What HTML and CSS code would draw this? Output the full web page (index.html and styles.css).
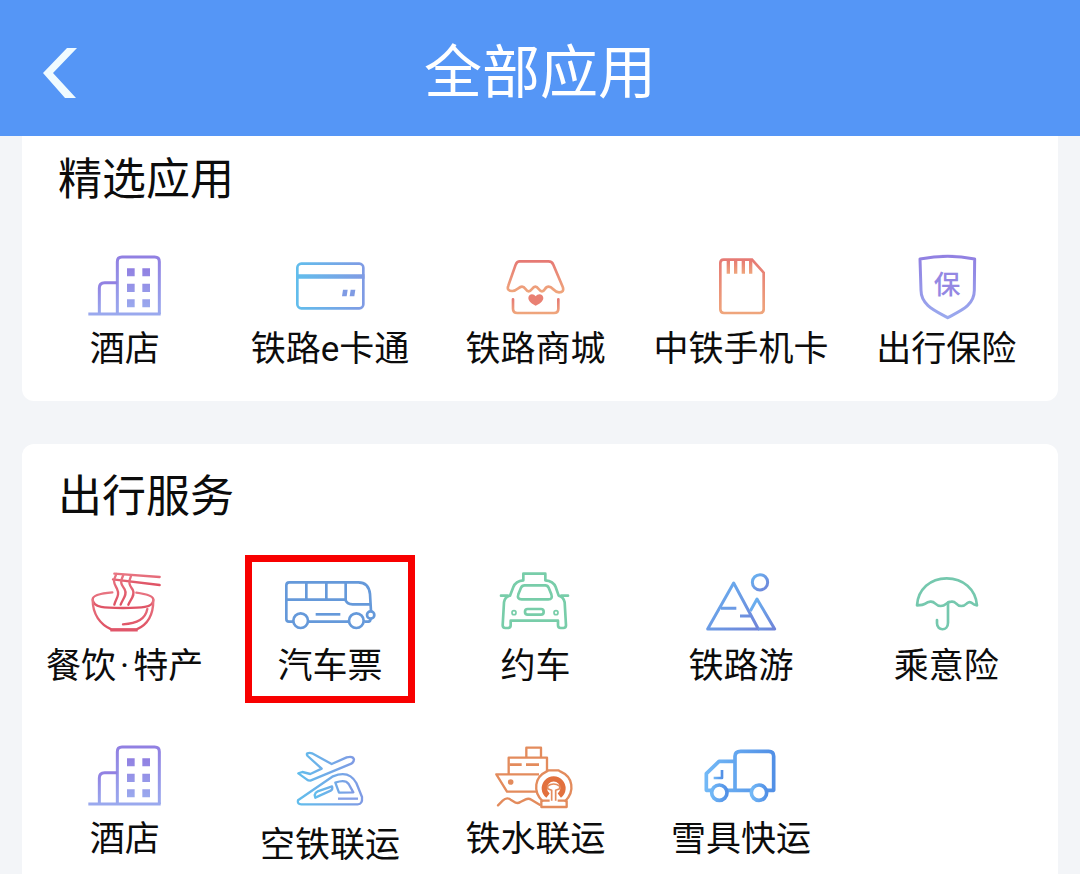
FILE: index.html
```
<!DOCTYPE html>
<html lang="zh-CN">
  <head>
    <meta charset="UTF-8" />
    <meta name="viewport" content="width=device-width, initial-scale=1.0" />
    <title>全部应用</title>
    <link rel="stylesheet" href="styles.css">
  </head>
  <body>
    <svg class="defs" aria-hidden="true">
      <defs>
        <linearGradient id="purple" x1="0" y1="0" x2="0" y2="1">
          <stop offset="0" stop-color="#9180e2" />
          <stop offset="1" stop-color="#9aa9ee" />
        </linearGradient>
        <linearGradient id="sky" x1="0" y1="0" x2="1" y2="0">
          <stop offset="0" stop-color="#62bdec" />
          <stop offset="1" stop-color="#7f9be4" />
        </linearGradient>
        <linearGradient id="coral" x1="0" y1="0" x2="0" y2="1">
          <stop offset="0" stop-color="#e67a74" />
          <stop offset="1" stop-color="#efa57c" />
        </linearGradient>
        <linearGradient id="peak" x1="0" y1="0" x2="1" y2="1">
          <stop offset="0" stop-color="#68b4f2" />
          <stop offset="1" stop-color="#6f83d8" />
        </linearGradient>
        <linearGradient id="truck" x1="0" y1="0" x2="1" y2="0">
          <stop offset="0" stop-color="#72b8f6" />
          <stop offset="1" stop-color="#5290e6" />
        </linearGradient>
        <linearGradient id="red" x1="0" y1="0" x2="0" y2="1">
          <stop offset="0" stop-color="#e87582" />
          <stop offset="1" stop-color="#df5264" />
        </linearGradient>
        <symbol id="hotel" viewBox="20 30 288 216">
          <g fill="none" stroke="url(#purple)" stroke-width="9">
            <path d="M141 222V65q0-14 14-14h98q14 0 14 14v157" />
            <path d="M87 222v-78q0-16 16-16h38M54 222h217" />
          </g>
          <path fill="url(#purple)" d="M170 85h23v24h-23zM216 85h23v24h-23zM170 131h23v25h-23zM216 131h23v25h-23zM170 178h23v24h-23zM216 178h23v24h-23z" />
        </symbol>
      </defs>
    </svg>

    <header>
      <button class="back" type="button" aria-label="返回">
        <svg viewBox="0 0 36 50"><path d="M24 0h10L10 25 33 50H22L0 25z" /></svg>
      </button>
      <h1>全部应用</h1>
    </header>

    <main>
      <section class="card card-first">
        <h2>精选应用</h2>
        <div class="apps">
          <a class="app" href="#">
            <svg class="icon"><use href="#hotel" /></svg>
            <span>酒店</span>
          </a>
          <a class="app" href="#">
            <svg class="icon" viewBox="637 30 288 216" fill="none" stroke="url(#sky)" stroke-width="8">
              <rect x="683" y="71" width="198" height="134" rx="12" />
              <path stroke-width="9" d="M684 107h196v5H684z" />
              <path fill="#7f9be4" stroke="none" d="M820 149h14l-3 20h-14zM843 149h14l-3 20h-14z" />
            </svg>
            <span>铁路e卡通</span>
          </a>
          <a class="app" href="#">
            <svg class="icon" viewBox="24 30 288 216" fill="none" stroke="url(#coral)" stroke-width="8" stroke-linecap="round" stroke-linejoin="round">
              <path d="M122 64h86q11 0 15 10l28 66q6 17-11 17c-16 0-18-17-31-17s-10 14-20 14-10-14-20-14-10 14-20 14-9-14-20-14-14 14-30 13q-17-1-11-16l22-63q4-10 12-10z" />
              <path d="M102 178v28q0 13 13 13h110q13 0 13-13v-28" />
              <path fill="#e98073" stroke="none" d="M170 197c-10-5-22-13-22-23 0-13 16-15 22-5 6-10 23-8 23 5 0 10-12 18-23 23z" />
            </svg>
            <span>铁路商城</span>
          </a>
          <a class="app" href="#">
            <svg class="icon" viewBox="641 30 288 216" fill="none" stroke="url(#coral)" stroke-width="8">
              <path d="M733 59h85l35 39v110q0 11-11 11H734q-11 0-11-11V69q0-10 10-10z" />
              <path stroke-width="10" d="M747 60v41M769 60v41M792 60v41M814 60v41" />
            </svg>
            <span>中铁手机卡</span>
          </a>
          <a class="app" href="#">
            <svg class="icon" viewBox="117 30 288 216">
              <path fill="none" stroke="url(#purple)" stroke-width="9" stroke-linejoin="round" d="M183 57q84-16 164 0l-1 94c0 48-46 63-80 82-34-19-80-36-80-82z" />
              <text class="shield-text" x="264" y="162" text-anchor="middle" fill="#9488e3">保</text>
            </svg>
            <span>出行保险</span>
          </a>
        </div>
      </section>

      <section class="card">
        <h2>出行服务</h2>
        <div class="apps">
          <a class="app" href="#">
            <svg class="icon" viewBox="140 51 288 216" fill="none" stroke="url(#red)" stroke-width="7" stroke-linecap="round">
              <path d="M246 127c-38 3-59 10-59 21 0 26 38 26 91 26s91 0 91-25c0-11-20-17-51-21" />
              <path d="M187 150c0 42 22 73 56 88h76c36-15 50-46 50-88M278 223c44-3 67-16 73-46" />
              <path stroke="#e0566a" stroke-width="9" stroke-linecap="butt" d="M240 240h82" />
              <path d="M252 71l136 10M248 88l140 17" />
              <path d="M258 72c-12 25-6 28 2 44 9 20-2 27-8 48M279 75c-12 25-5 29 4 43 9 16-6 29-12 46M302 78c-10 22-3 29 5 41 9 16-6 29-13 45" />
            </svg>
            <span>餐饮<span class="dot">·</span>特产</span>
          </a>
          <a class="app app-marked" href="#">
            <svg class="icon" viewBox="127 51 288 216" fill="none" stroke="#6599da" stroke-width="8">
              <path d="M160 215h-12q-8 0-8-8V106q0-9 9-9h207q31 0 35 35l3 52M207 215h120M374 215h12q7 0 7-11" />
              <path d="M140 149h177q4 14 22 14h52M200 97v52M260 97v52M318 97v52" />
              <path d="M228 193h74" />
              <circle cx="183" cy="212" r="22" />
              <circle cx="350" cy="212" r="22" />
              <circle cx="393" cy="195" r="11" />
            </svg>
            <span>汽车票</span>
          </a>
          <a class="app" href="#">
            <svg class="icon" viewBox="24 21 288 216" fill="none" stroke="#78cda9" stroke-width="8" stroke-linecap="round" stroke-linejoin="round">
              <path d="M133 61V41h66v20q24 2 31 20l9 26q14 3 18 20l4 69q0 8-8 8h-8q-8 0-8-8v-14H95v14q0 8-8 8h-8q-8 0-8-8l4-69q3-17 18-20l10-26q7-18 30-20z" />
              <path d="M66 107h20M247 107h20" />
              <path d="M137 76h62q7 0 10 7l8 20q5 15-9 15h-80q-15 0-10-15l8-20q3-7 11-7z" />
              <rect x="138" y="147" width="56" height="17" rx="8" />
              <g stroke-width="5">
                <circle cx="105" cy="158" r="6" />
                <circle cx="231" cy="158" r="6" />
              </g>
            </svg>
            <span>约车</span>
          </a>
          <a class="app" href="#">
            <svg class="icon" viewBox="641 21 288 216" fill="none" stroke="url(#peak)" stroke-width="9" stroke-linejoin="round">
              <path d="M763 69l74 138H685zM725 145h46M782 168h34" />
              <path d="M813 153l20-36 53 90h-50" />
              <circle cx="842" cy="67" r="23" />
            </svg>
            <span>铁路游</span>
          </a>
          <a class="app" href="#">
            <svg class="icon" viewBox="57 21 288 216" fill="none" stroke="#75c8ae" stroke-width="8" stroke-linecap="round" stroke-linejoin="round">
              <path d="M114 136c3-48 40-81 89-81s87 32 91 81q-9-1-14-6-8-7-16 0-8 8-17 8t-16-8q-6-6-14-5-8 0-15 6-8 7-17 7t-16-7-15-6-15 6-25 5z" />
              <path d="M207 128v60c0 26-33 26-33 2v-10" />
            </svg>
            <span>乘意险</span>
          </a>
          <a class="app" href="#">
            <svg class="icon"><use href="#hotel" /></svg>
            <span>酒店</span>
          </a>
          <a class="app" href="#">
            <svg class="icon icon-tall" viewBox="637 30 288 234" fill="none" stroke="url(#sky)" stroke-width="7" stroke-linejoin="round">
              <path d="M713 70q7-3 14 0l59 32 45-20q19-5 22 6 0 8-8 13l-123 51q-7 0-11-4l-25-18 12-4 24 6 34-16-42-38q-4-5-1-8z" />
              <path d="M685 211l105-72q48-20 70 20l17 42q2 22-13 22H695q-13-1-10-12z" />
              <path d="M797 158q30-11 40 4l14 25-43 1zM735 195q2-8 9-11l43-15q3 9-4 13l-46 21z" />
              <path stroke="#86a0e6" d="M805 206h60" />
            </svg>
            <span>空铁联运</span>
          </a>
          <a class="app" href="#">
            <svg class="icon" viewBox="24 30 288 216" fill="none" stroke="#e38b5c" stroke-width="7" stroke-linejoin="round">
              <path d="M142 81V53h44v28M89 131V83h115v40M172 185H84l-32-52h128" />
              <path stroke-width="8" d="M92 104h36M141 104h39" />
              <circle cx="95" cy="156" r="5" fill="#e38b5c" />
              <path stroke-linecap="round" d="M57 226l14-14q12-12 24-3l15 9q7 3 14-2l16-8q9-4 17 1l25 15" />
              <path d="M190 213c-29-29-23-72 12-88l7-4h29l7 4c37 16 43 58 14 88h4v18h-76v-18z" />
              <path stroke="#e2703d" stroke-width="16" d="M207 197a28 28 0 1 1 34 0" />
              <path fill="#ffffff" stroke-width="5" d="M218 212v-31l-12-5v-8q18-12 36 0v8l-12 5v31" />
              <path d="M188 212h24M236 212h27" />
            </svg>
            <span>铁水联运</span>
          </a>
          <a class="app" href="#">
            <svg class="icon" viewBox="641 30 288 216" fill="none" stroke="url(#truck)" stroke-width="11" stroke-linejoin="round">
              <path d="M696 181h-15v-50l38-37h48M743 181h72M862 181h21V79q0-15-15-15h-84q-17 0-17 15v102" />
              <path stroke-width="8" d="M728 120v24h-25" />
              <circle cx="720" cy="188" r="23" />
              <circle cx="839" cy="188" r="23" />
            </svg>
            <span>雪具快运</span>
          </a>
        </div>
      </section>
    </main>
  </body>
</html>
```

FILE: styles.css
```
:root {
  --primary-color: #5596f6;
  --background-color: #f3f5f8;
  --card-bg: #ffffff;
  --text-color: #0c0c0c;
  --mark-color: #f80000;
}

* {
  box-sizing: border-box;
}

body {
  margin: 0;
  height: 100vh;
  display: flex;
  flex-direction: column;
  overflow: hidden;
  background-color: var(--background-color);
  color: var(--text-color);
  font-family: Roboto, "Noto Sans CJK SC", sans-serif;
}

.defs {
  position: absolute;
  width: 0;
  height: 0;
}

header {
  flex: none;
  display: grid;
  grid-template-columns: 122px 1fr 122px;
  align-items: center;
  height: 136px;
  padding-top: 10px;
  background-color: var(--primary-color);
  color: white;
}

h1 {
  margin: 0;
  text-align: center;
  font-size: 58px;
  line-height: 80px;
  font-weight: 400;
}

.back {
  height: 80px;
  padding: 0;
  border: none;
  background: none;
  cursor: pointer;
}

.back svg {
  display: block;
  width: 36px;
  height: 50px;
  margin: 0 auto;
  fill: #f0fbff;
}

main {
  flex: 1;
  min-height: 0;
  padding: 0 22px;
  overflow-y: auto;
  scrollbar-width: none;
}

.card {
  padding: 23px 9px 29px 0;
  margin-bottom: 43px;
  background-color: var(--card-bg);
  border-radius: 12px;
}

.card-first {
  padding-top: 14px;
  border-radius: 0 0 12px 12px;
}

h2 {
  margin: 0 0 40px;
  padding-left: 36px;
  font-size: 44px;
  line-height: 60px;
  font-weight: 400;
}

.apps {
  display: grid;
  grid-template-columns: repeat(5, 1fr);
  row-gap: 51px;
}

.app {
  position: relative;
  display: flex;
  flex-direction: column;
  align-items: center;
  color: inherit;
  text-decoration: none;
  font-size: 35px;
  line-height: 44px;
  white-space: nowrap;
}

.icon {
  width: 96px;
  height: 72px;
  margin-bottom: 6px;
}

.icon-tall {
  height: 78px;
}

.shield-text {
  font-size: 80px;
  font-weight: 500;
}

.dot {
  margin: 0 4px;
}

.app-marked::after {
  content: "";
  position: absolute;
  inset: -12px 18px -14px;
  border: 7px solid var(--mark-color);
}
```
